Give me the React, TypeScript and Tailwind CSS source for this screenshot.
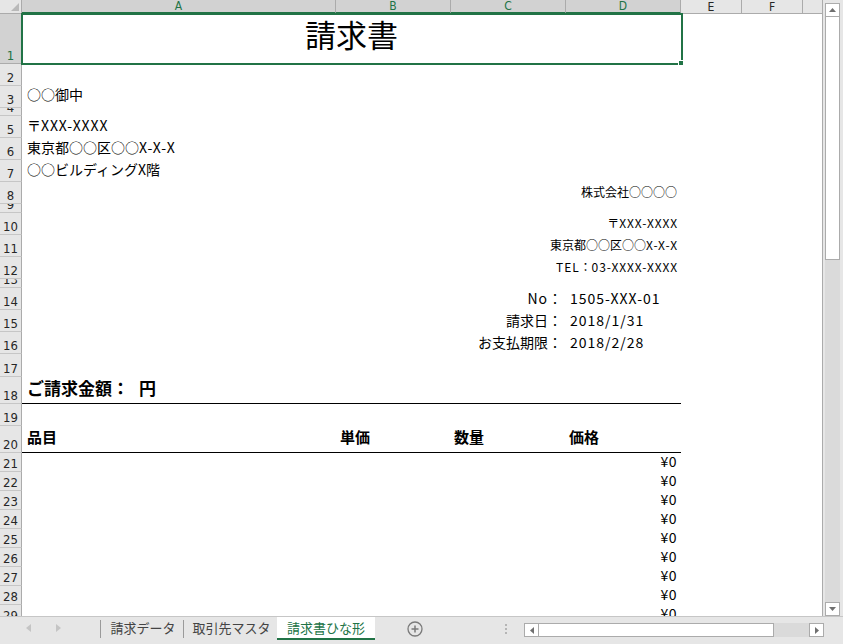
import React from "react";

type RowDef = { n: number; h: string; sel?: boolean; body?: string; content?: React.ReactNode };

const L = ({ children }: { children: React.ReactNode }) => <span className="tracking-[0.9px]">{children}</span>;

const Yen = () => (
  <div className="col-start-4 text-right pr-[4px] text-[14px] leading-[16px] pb-[4px]">
    <span className="tracking-[0.5px]">¥0</span>
  </div>
);

const rows: RowDef[] = [
  {
    n: 1,
    h: "h-[50px]",
    sel: true,
    content: (
      <div className="col-span-4 self-stretch flex items-center justify-center text-[31px] leading-[34px] pb-[10px]">請求書</div>
    ),
  },
  { n: 2, h: "h-[22px]" },
  { n: 3, h: "h-[22px]", content: <div className="col-span-4 pl-[5px] text-[14px] leading-[16px] pb-[6px]">○○御中</div> },
  { n: 4, h: "h-[8px]" },
  {
    n: 5,
    h: "h-[22px]",
    content: (
      <div className="col-span-4 pl-[5px] text-[14px] leading-[16px] pb-[5px]">
        〒<L>XXX-XXXX</L>
      </div>
    ),
  },
  {
    n: 6,
    h: "h-[22px]",
    content: (
      <div className="col-span-4 pl-[5px] text-[14px] leading-[16px] pb-[5px]">
        東京都○○区○○<L>X-X-X</L>
      </div>
    ),
  },
  { n: 7, h: "h-[22px]", content: <div className="col-span-4 pl-[5px] text-[14px] leading-[16px] pb-[5px]">○○ビルディングX階</div> },
  { n: 8, h: "h-[22px]", content: <div className="col-span-4 text-right pr-[4px] text-[12px] leading-[14px] pb-[5px]">株式会社○○○○</div> },
  { n: 9, h: "h-[9px]" },
  {
    n: 10,
    h: "h-[22px]",
    content: (
      <div className="col-span-4 text-right pr-[3px] text-[12px] leading-[14px] pb-[5px]">
        〒<L>XXX-XXXX</L>
      </div>
    ),
  },
  {
    n: 11,
    h: "h-[22px]",
    content: (
      <div className="col-span-4 text-right pr-[3px] text-[12px] leading-[14px] pb-[5px]">
        東京都○○区○○<L>X-X-X</L>
      </div>
    ),
  },
  {
    n: 12,
    h: "h-[22px]",
    content: (
      <div className="col-span-4 text-right pr-[3px] text-[12px] leading-[14px] pb-[5px]">
        <L>TEL</L>：<L>03-XXXX-XXXX</L>
      </div>
    ),
  },
  { n: 13, h: "h-[9px]" },
  {
    n: 14,
    h: "h-[22px]",
    content: (
      <>
        <div className="col-start-3 text-right pr-[4px] text-[14px] leading-[16px] pb-[4px]">
          <L>No</L>：
        </div>
        <div className="col-start-4 pl-[4px] text-[14px] leading-[16px] pb-[4px]">
          <span className="tracking-[1px]">1505-XXX-01</span>
        </div>
      </>
    ),
  },
  {
    n: 15,
    h: "h-[22px]",
    content: (
      <>
        <div className="col-start-3 text-right pr-[4px] text-[14px] leading-[16px] pb-[4px]">請求日：</div>
        <div className="col-start-4 pl-[4px] text-[14px] leading-[16px] pb-[4px]">
          <span className="tracking-[1px]">2018/1/31</span>
        </div>
      </>
    ),
  },
  {
    n: 16,
    h: "h-[22px]",
    content: (
      <>
        <div className="col-start-3 text-right pr-[4px] text-[14px] leading-[16px] pb-[4px]">お支払期限：</div>
        <div className="col-start-4 pl-[4px] text-[14px] leading-[16px] pb-[4px]">
          <span className="tracking-[1px]">2018/2/28</span>
        </div>
      </>
    ),
  },
  { n: 17, h: "h-[23px]" },
  {
    n: 18,
    h: "h-[27px]",
    body: "border-b border-black",
    content: (
      <div className="col-span-4 pl-[5px] text-[17px] leading-[20px] font-bold pb-[5px]">
        ご請求金額：<span className="ml-[10px]">円</span>
      </div>
    ),
  },
  { n: 19, h: "h-[22px]" },
  {
    n: 20,
    h: "h-[27px]",
    body: "border-b border-black",
    content: (
      <>
        <div className="pl-[5px] text-[15px] leading-[18px] font-bold pb-[6px]">品目</div>
        <div className="pl-[4px] text-[15px] leading-[18px] font-bold pb-[6px]">単価</div>
        <div className="pl-[3px] text-[15px] leading-[18px] font-bold pb-[6px]">数量</div>
        <div className="pl-[3px] text-[15px] leading-[18px] font-bold pb-[6px]">価格</div>
      </>
    ),
  },
  { n: 21, h: "h-[19px]", content: <Yen /> },
  { n: 22, h: "h-[19px]", content: <Yen /> },
  { n: 23, h: "h-[19px]", content: <Yen /> },
  { n: 24, h: "h-[19px]", content: <Yen /> },
  { n: 25, h: "h-[19px]", content: <Yen /> },
  { n: 26, h: "h-[19px]", content: <Yen /> },
  { n: 27, h: "h-[19px]", content: <Yen /> },
  { n: 28, h: "h-[19px]", content: <Yen /> },
  { n: 29, h: "h-[19px]", content: <Yen /> },
];

const HEAD = "font-['Liberation_Sans_Narrow','DejaVu_Sans_Condensed','Liberation_Sans',sans-serif]";

function ColHead({ label, w, sel }: { label: string; w: string; sel?: boolean }) {
  return (
    <div
      className={
        w +
        " h-full shrink-0 flex items-center justify-center border-r text-[12px] leading-none " +
        (sel
          ? "bg-[#d2d2d2] text-[#217346] border-[#ababab] border-b-2 border-b-[#217346]"
          : "bg-[#e6e6e6] text-[#262626] border-[#ababab] border-b border-b-[#ababab]")
      }
    >
      <span className={HEAD}>{label}</span>
    </div>
  );
}

export default function App() {
  return (
    <div className="w-[843px] h-[644px] bg-[#e6e6e6] flex flex-col overflow-hidden font-['Noto_Sans_CJK_JP',sans-serif] text-black">
      <div className="flex h-[616px] shrink-0">
        {/* sheet */}
        <div className="relative w-[823px] h-full shrink-0 bg-white border-r border-[#ababab] overflow-hidden flex flex-col">
          {/* column headers */}
          <div className="flex h-[14px] shrink-0">
            <div className="relative w-[22px] h-full shrink-0 bg-[#e6e6e6] border-r border-b border-[#ababab]">
              <svg className="absolute left-[11px] top-[3px]" width="8" height="8" viewBox="0 0 8 8">
                <polygon points="8,0 8,8 0,8" fill="#b9b9b9" />
              </svg>
            </div>
            <ColHead label="A" w="w-[314px]" sel />
            <ColHead label="B" w="w-[115px]" sel />
            <ColHead label="C" w="w-[115px]" sel />
            <ColHead label="D" w="w-[115px]" sel />
            <ColHead label="E" w="w-[61px]" />
            <ColHead label="F" w="w-[61px]" />
            <div className="flex-1 h-full bg-[#e6e6e6] border-b border-[#ababab]" />
          </div>
          {/* rows */}
          {rows.map((r) => (
            <div key={r.n} className={r.h + " flex shrink-0"}>
              <div
                className={
                  "w-[22px] h-full shrink-0 border-r border-b flex items-end justify-center overflow-hidden " +
                  (r.sel
                    ? "bg-[#d2d2d2] text-[#217346] border-[#ababab] border-r-[#217346]"
                    : "bg-[#e6e6e6] text-[#262626] border-[#c6c6c6] border-r-[#ababab]")
                }
              >
                <span className={HEAD + " text-[13px] leading-[13px] pb-[1px]"}>{r.n}</span>
              </div>
              <div
                className={
                  "grid grid-cols-[314px_115px_115px_115px] w-[659px] h-full items-end " + (r.body ?? "")
                }
              >
                {r.content}
              </div>
            </div>
          ))}
          {/* selection */}
          <div className="absolute left-[21px] top-[13px] w-[662px] h-[52px] border-2 border-[#217346] pointer-events-none" />
          <div className="absolute left-[678px] top-[60px] w-[6px] h-[6px] bg-[#217346] border border-white" />
        </div>
        {/* vertical scrollbar */}
        <div className="w-[20px] h-full flex justify-center pl-[2px] pr-[3px]">
          <div className="w-[15px] h-full flex flex-col pt-[3px]">
            <div className="h-[14px] shrink-0 bg-white border border-[#ababab] flex items-center justify-center">
              <svg width="7" height="4" viewBox="0 0 7 4">
                <polygon points="3.5,0 7,4 0,4" fill="#6f6f6f" />
              </svg>
            </div>
            <div className="h-[243px] shrink-0 bg-white border-x border-b border-[#ababab]" />
            <div className="flex-1 bg-[#dadada]" />
            <div className="h-[14px] shrink-0 bg-white border border-[#ababab] flex items-center justify-center">
              <svg width="7" height="4" viewBox="0 0 7 4">
                <polygon points="0,0 7,0 3.5,4" fill="#6f6f6f" />
              </svg>
            </div>
          </div>
        </div>
      </div>
      {/* tab bar */}
      <div className="flex-1 flex items-start border-t border-[#c6c6c6] text-[13px]">
        <div className="w-[100px] h-[22px] flex items-center shrink-0">
          <svg className="ml-[26px]" width="5" height="8" viewBox="0 0 5 8">
            <polygon points="5,0 5,8 0,4" fill="#c4c4c4" />
          </svg>
          <svg className="ml-[25px]" width="5" height="8" viewBox="0 0 5 8">
            <polygon points="0,0 0,8 5,4" fill="#c4c4c4" />
          </svg>
        </div>
        <div className="w-px h-[18px] mt-[3px] bg-[#9a9a9a] shrink-0" />
        <div className="w-[82px] h-[22px] flex items-center justify-center pl-[2px] text-[#444444] shrink-0">請求データ</div>
        <div className="w-px h-[18px] mt-[3px] bg-[#9a9a9a] shrink-0" />
        <div className="w-[93px] h-[22px] flex items-center justify-center pl-[2px] text-[#444444] shrink-0">取引先マスタ</div>
        <div className="w-[98px] h-[23px] flex items-center justify-center bg-white text-[#217346] border-b-2 border-[#217346] shrink-0">
          請求書ひな形
        </div>
        <div className="w-[132px] h-[24px] flex items-center shrink-0">
          <svg className="ml-[32px]" width="16" height="16" viewBox="0 0 16 16">
            <circle cx="8" cy="8" r="7" fill="none" stroke="#7a7a7a" strokeWidth="1.3" />
            <path d="M8 4.5v7M4.5 8h7" stroke="#7a7a7a" strokeWidth="1.5" />
          </svg>
          <div className="ml-[82px] flex flex-col gap-[2px]">
            <div className="w-[2px] h-[2px] bg-[#b5b5b5]" />
            <div className="w-[2px] h-[2px] bg-[#b5b5b5]" />
            <div className="w-[2px] h-[2px] bg-[#b5b5b5]" />
          </div>
        </div>
        <div className="w-[300px] h-[14px] mt-[6px] flex shrink-0 ml-[17px]">
          <div className="w-[15px] h-full bg-white border border-[#ababab] flex items-center justify-center">
            <svg width="4" height="7" viewBox="0 0 4 7">
              <polygon points="4,0 4,7 0,3.5" fill="#6f6f6f" />
            </svg>
          </div>
          <div className="w-[235px] h-full bg-white border-y border-r border-[#ababab]" />
          <div className="flex-1 h-full bg-[#dadada]" />
          <div className="w-[15px] h-full bg-white border border-[#ababab] flex items-center justify-center">
            <svg width="4" height="7" viewBox="0 0 4 7">
              <polygon points="0,0 0,7 4,3.5" fill="#6f6f6f" />
            </svg>
          </div>
        </div>
      </div>
    </div>
  );
}
